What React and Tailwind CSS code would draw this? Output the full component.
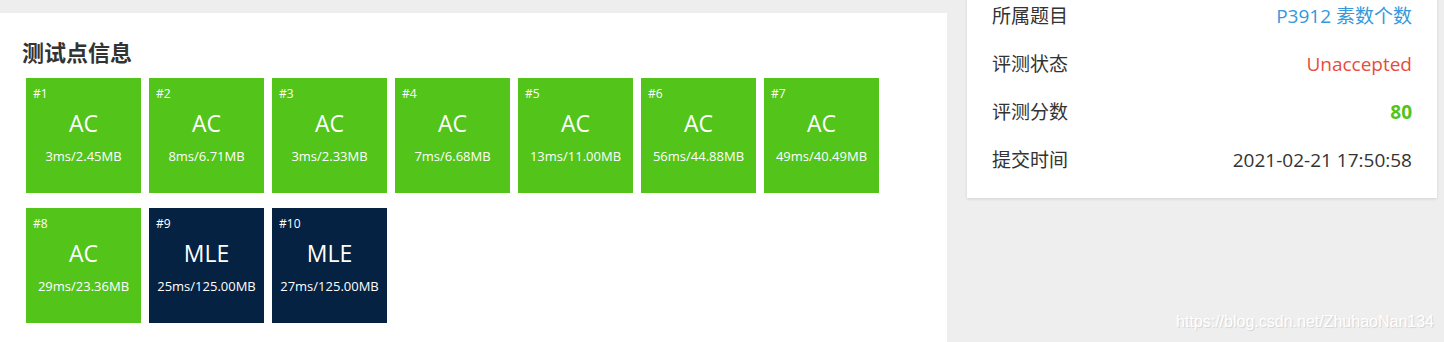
import React from 'react';

const cases = [
  { id: 1, status: 'AC', info: '3ms/2.45MB' },
  { id: 2, status: 'AC', info: '8ms/6.71MB' },
  { id: 3, status: 'AC', info: '3ms/2.33MB' },
  { id: 4, status: 'AC', info: '7ms/6.68MB' },
  { id: 5, status: 'AC', info: '13ms/11.00MB' },
  { id: 6, status: 'AC', info: '56ms/44.88MB' },
  { id: 7, status: 'AC', info: '49ms/40.49MB' },
  { id: 8, status: 'AC', info: '29ms/23.36MB' },
  { id: 9, status: 'MLE', info: '25ms/125.00MB' },
  { id: 10, status: 'MLE', info: '27ms/125.00MB' },
];

function CaseTile({ item }) {
  const bg = item.status === 'AC' ? 'bg-[#52c41a]' : 'bg-[#052242]';
  return (
    <div className={`${bg} w-[115px] h-[115px] mx-[4px] mb-[15px] text-white flex flex-col`}>
      <div className="text-[12px] leading-[16px] ml-[7px] mt-[8px]">#{item.id}</div>
      <div className="text-[23px] leading-[30px] text-center mt-[6px]">{item.status}</div>
      <div className="text-[13px] leading-[18px] text-center mt-[9px]">{item.info}</div>
    </div>
  );
}

function InfoRow({ label, children }) {
  return (
    <div className="flex items-center justify-between h-[48px]">
      <span className="text-[19px] text-[#333]">{label}</span>
      {children}
    </div>
  );
}

export default function App() {
  return (
    <div className="relative w-[1444px] h-[342px] overflow-hidden bg-[#eeeeee] font-['Open_Sans','Noto_Sans_CJK_SC',sans-serif]">
      <div className="flex items-start">
        {/* 测试点 */}
        <div className="w-[947px] h-[400px] mt-[13px] bg-white pl-[22px] pt-[24px]">
          <h3 className="text-[22px] leading-[30px] font-bold text-[#333]">测试点信息</h3>
          <div className="flex flex-wrap w-[880px] mt-[11px]">
            {cases.map((c) => (
              <CaseTile key={c.id} item={c} />
            ))}
          </div>
        </div>

        {/* 记录信息 */}
        <div className="w-[470px] ml-[20px] -mt-[22px] bg-white px-[25px] pt-[14px] pb-[14px] shadow-[0_1px_3px_rgba(0,0,0,0.12)]">
          <InfoRow label="所属题目">
            <span className="text-[19px] text-[#3498db]">P3912 素数个数</span>
          </InfoRow>
          <InfoRow label="评测状态">
            <span className="text-[19px] text-[#e74c3c]">Unaccepted</span>
          </InfoRow>
          <InfoRow label="评测分数">
            <span className="text-[19px] font-bold text-[#52c41a]">80</span>
          </InfoRow>
          <InfoRow label="提交时间">
            <span className="text-[19px] text-[#333]">2021-02-21 17:50:58</span>
          </InfoRow>
        </div>
      </div>

      <div className="absolute right-[10px] bottom-[8px] text-[16px] font-['Liberation_Sans',sans-serif] text-white [text-shadow:1px_1px_1px_rgba(0,0,0,0.12)]">
        https://blog.csdn.net/ZhuhaoNan134
      </div>
    </div>
  );
}
